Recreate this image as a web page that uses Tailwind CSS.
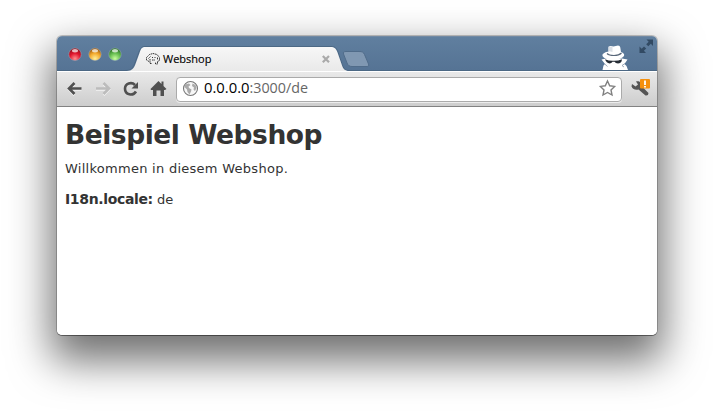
<!DOCTYPE html>
<html lang="de">
<head>
<meta charset="utf-8">
<title>Webshop</title>
<script src="https://cdn.jsdelivr.net/npm/@tailwindcss/browser@4"></script>
</head>
<body class="bg-white w-[714px] h-[414px] overflow-hidden pl-[57px] pt-[36px] font-['Open_Sans','Noto_Sans',sans-serif]">
<div class="w-[600px] h-[299px] rounded-[5px] overflow-hidden flex flex-col bg-white shadow-[0_0_0_1px_rgba(0,0,0,0.2),0_1px_0_rgba(0,0,0,0.3),0_20px_42px_6px_rgba(0,0,0,0.56)]">
  <header class="h-[35px] shrink-0 flex bg-linear-to-b from-[#607f9f] to-[#557394] border-t border-[#7189a3]">
    <svg class="w-[600px] h-[34px] block" viewBox="57 37 600 34" fill="none">
      <defs>
        <radialGradient id="r" cx=".5" cy=".85" r=".8"><stop offset="0" stop-color="#ff8f8f"/><stop offset=".55" stop-color="#e0152d"/><stop offset="1" stop-color="#8d1420"/></radialGradient>
        <radialGradient id="y" cx=".5" cy=".85" r=".8"><stop offset="0" stop-color="#fff09a"/><stop offset=".55" stop-color="#f3a92c"/><stop offset="1" stop-color="#985812"/></radialGradient>
        <radialGradient id="g" cx=".5" cy=".85" r=".8"><stop offset="0" stop-color="#c9ff9f"/><stop offset=".55" stop-color="#66bd50"/><stop offset="1" stop-color="#2b7026"/></radialGradient>
        <linearGradient id="t" x1="0" y1="0" x2="0" y2="1"><stop stop-color="#f7f7f7"/><stop offset="1" stop-color="#e9e9e9"/></linearGradient>
      </defs>
      <g stroke="#a9bccb" stroke-opacity=".5" stroke-width=".8">
        <circle cx="75" cy="54.300" r="6.200" fill="url(#r)"/><circle cx="95" cy="54.300" r="6.200" fill="url(#y)"/><circle cx="115" cy="54.300" r="6.200" fill="url(#g)"/>
      </g>
      <g fill="#fff" fill-opacity=".7"><ellipse cx="75" cy="50.800" rx="3" ry="1.700"/><ellipse cx="95" cy="50.800" rx="3" ry="1.700"/><ellipse cx="115" cy="50.800" rx="3" ry="1.700"/></g>
      <path d="M57 70.500H126C131 70.500 133 68 134.500 64L139 52C140.500 48 142 46.500 145 46.500H331C335 46.500 336.500 48 338 52L342 64C343.500 68.500 345 70.500 349 70.500H657" stroke="#4c6884"/>
      <path d="M127 71C132 71 134 68 135.500 64L139.500 53C141 48.500 142 47 145.500 47H330.500C334.500 47 336 48.500 337.500 52.500L341.500 64C343 69 345 71 349 71Z" fill="url(#t)"/>
      <path d="M346 51.500H359C362 51.500 363.500 52 364.500 54.500L368.500 64C369 65.500 368.500 66.500 367 66.500H352C349.500 66.500 348 65.500 347 63L343.500 54C343 52 344 51.500 346 51.500Z" fill="#8098b2" stroke="#506c8a"/>
      <g stroke="#222" stroke-width=".9" stroke-dasharray="1.600 .6">
        <path d="M149 61.500L146.500 60V57.500L149.500 54.500L153 53.500L157 54.500L159.500 57.500V60.500L157.500 61.500V64H155.500V62"/>
        <path d="M148.500 58.500L150.500 56.500M150 59V63.500H152M152.500 57V58M155 57V58M152 60H155M157.500 57.500V60"/>
      </g>
      <path d="M322.800 56L329 62.200M329 56L322.800 62.200" stroke="#aaa" stroke-width="2.200"/>
      <path d="M602.500 70L603.500 65.500L605 64L601.500 59.500L606 58.500H622L627.500 59.500L624.500 64L626.500 66L628 70Z" fill="#fff"/>
      <path d="M608.500 51.500V47.500Q608.500 46 610.500 46L613.500 46.500L618 45.500Q620 45.500 620.300 47.500L621 52Q625 53.500 624 56Q621.500 59.500 613 59.500Q604 59.500 602.500 56Q601.500 53 608.500 51.500Z" fill="#fff"/>
      <path d="M608.500 46.500L612.500 47V52L608.500 51Z" fill="#dbe0e6"/>
      <path d="M607 53.500Q609 55.500 614 55.500Q619 55.500 621.500 53" stroke="#59687a" stroke-width="1.100"/>
      <path d="M605 59.300Q609 61 613.500 60.800Q618 61 622 59.300L621.500 61.500Q620.500 63.500 618 63.500Q615.500 63.500 614.500 61.800H612.500Q611.500 63.500 609.500 63.500Q606.500 63 605 59.300Z" fill="#252c35"/>
      <path d="M605 64.200L607.500 66.500M625 63.500L622 65.500L624 67" stroke="#8797a8" stroke-width=".8"/>
      <path d="M646.500 39.500H653V46L650.800 43.800L648.300 46.300L646.200 44.200L648.700 41.700ZM639.500 46.500L641.700 48.700L644 46.400L646.200 48.500L643.900 50.800L646 53H639.500Z" fill="#324a63"/>
      <text x="163" y="63" font-size="11.300" textLength="48.500" lengthAdjust="spacingAndGlyphs" fill="#000" stroke="#000" stroke-width=".15">Webshop</text>
    </svg>
  </header>
  <nav class="h-[36px] shrink-0 flex items-center bg-linear-to-b from-[#e9e9e9] to-[#cdcdcd] border-t border-t-white border-b border-b-[#828282]">
    <svg class="w-[119px] h-[34px] shrink-0" viewBox="57 72 119 34" fill="none">
      <g stroke="#fff" stroke-opacity=".7" stroke-width="2.500" transform="translate(0 1)"><path d="M81.500 88.500H70M74.500 83L69 88.500L74.500 94M96 88.500H108M103.500 83L109 88.500L103.500 94"/></g>
      <path d="M81.500 88.500H70M74.500 83L69 88.500L74.500 94" stroke="#505050" stroke-width="2.600"/>
      <path d="M96 88.500H108M103.500 83L109 88.500L103.500 94" stroke="#bcbcbc" stroke-width="2.600"/>
      <path d="M135 85C131.500 81.500 125 83.500 125 88.800C125 95 133 96.500 136 91.500" stroke="#505050" stroke-width="2.600"/>
      <path d="M138 82V88.500H131.500Z" fill="#505050"/>
      <path d="M150.500 89L158.500 81L161.500 84V81.500H163.500V86L166.500 89L165 90H164V96H160.500V90.500H156.500V96H153V90H151Z" fill="#505050"/>
    </svg>
    <div class="w-[446px] h-[25px] rounded-[4px] border border-[#aaa] bg-white flex items-center shadow-[0_1px_0_rgba(255,255,255,.6)]">
      <svg class="w-[444px] h-[23px]" viewBox="177 77 444 23" fill="none">
        <circle cx="190.500" cy="87.500" r="7" fill="#f7f7f7" stroke="#777" stroke-width="1.100"/>
        <path d="M185 83.500L189 82.500L190.500 84L188.500 85.500L189 87L191.500 88.500L191 90.500L189.500 93.500L187.500 91L187 88.500L184.500 86ZM192.500 82.500L195.500 84L196.500 87L195 90L193.500 88.500L194 86.500L192 85Z" fill="#aaa"/>
        <text x="204" y="92" font-size="14.200" textLength="45.500" lengthAdjust="spacingAndGlyphs" fill="#000">0.0.0.0</text>
        <text x="249.500" y="92" font-size="14.200" textLength="58.500" lengthAdjust="spacingAndGlyphs" fill="#666">:3000/de</text>
        <path d="M607.500 80L609.700 84.800L614.600 85.400L611 89L612 94L607.500 91.500L603 94L604 89L600.400 85.400L605.300 84.800Z" stroke="#808080" stroke-width="1.400"/>
      </svg>
    </div>
    <svg class="w-[35px] h-[34px] shrink-0" viewBox="622 72 35 34" fill="none">
      <path d="M632 84L635.500 86.500L638 84.500L636 81.500C640 80.500 642.500 83.500 642 86.500L648.500 93Q648.500 96 645.500 95.500L638.500 89.500Q633.500 90.500 631.500 86.500Z" fill="#555"/>
      <rect x="640" y="79" width="10" height="9.500" rx="1" fill="#f5900d"/>
      <path d="M645 80.500V85M645 86V87.600" stroke="#fff" stroke-width="1.800"/>
    </svg>
  </nav>
  <main class="flex-1 bg-white px-[8px] text-[#333] font-['DejaVu_Sans',Verdana,sans-serif]">
    <h1 class="mt-[12px] h-[32px] leading-[32px] text-[26.5px] font-bold tracking-[-0.46px] whitespace-nowrap">Beispiel Webshop</h1>
    <p class="mt-[9px] h-[18px] leading-[18px] text-[13px] tracking-[0.27px] whitespace-nowrap">Willkommen in diesem Webshop.</p>
    <p class="mt-[12px] h-[18px] leading-[18px] text-[13px] whitespace-nowrap"><b class="text-[14px] tracking-[-0.35px]">I18n.locale:</b> de</p>
  </main>
</div>
</body>
</html>
